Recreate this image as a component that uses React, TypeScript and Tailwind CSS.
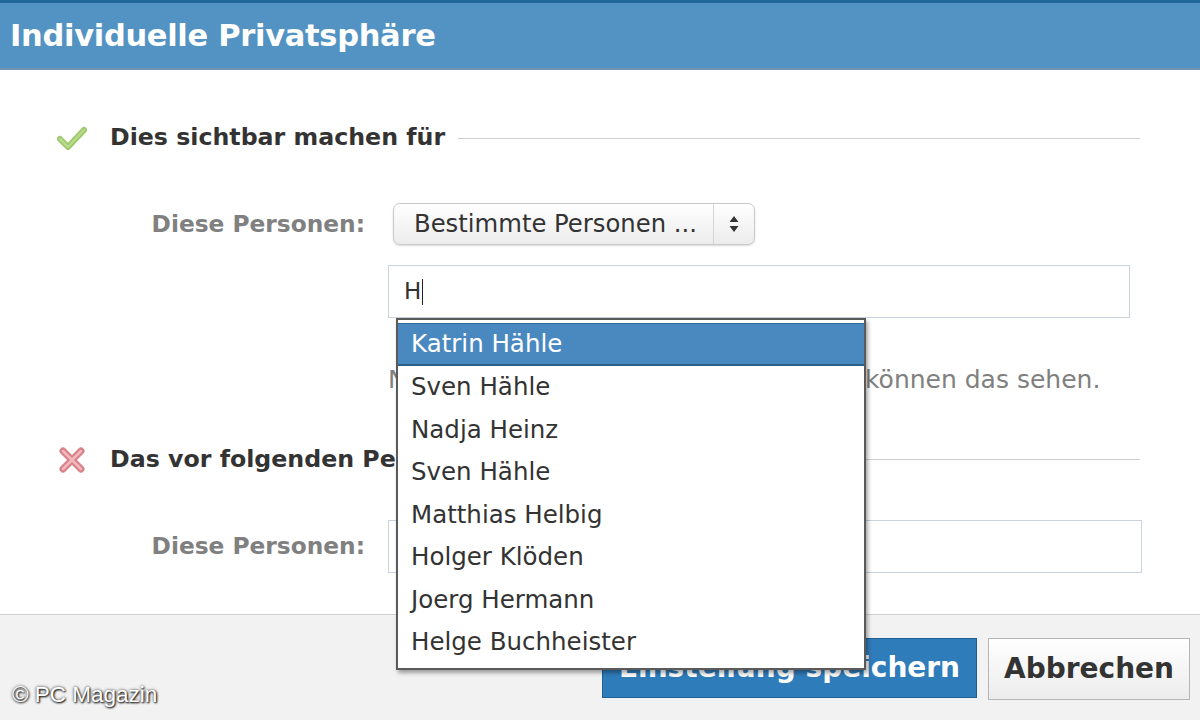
import React from "react"

const names = [
  "Katrin Hähle",
  "Sven Hähle",
  "Nadja Heinz",
  "Sven Hähle",
  "Matthias Helbig",
  "Holger Klöden",
  "Joerg Hermann",
  "Helge Buchheister",
]

function CheckIcon() {
  return (
    <svg width="30" height="26" viewBox="0 0 30 26">
      <path d="M3 14 L11 22 L27 5" fill="none" stroke="#9cc76a" strokeWidth="6" strokeLinecap="round" strokeLinejoin="round" />
      <path d="M3 14 L11 22 L27 5" fill="none" stroke="#b9dc8c" strokeWidth="2.5" strokeLinecap="round" strokeLinejoin="round" />
    </svg>
  )
}

function CrossIcon() {
  return (
    <svg width="28" height="28" viewBox="0 0 28 28">
      <path d="M5 5 L23 23 M23 5 L5 23" fill="none" stroke="#d9828a" strokeWidth="7" strokeLinecap="round" />
      <path d="M5 5 L23 23 M23 5 L5 23" fill="none" stroke="#f3b8bd" strokeWidth="2.5" strokeLinecap="round" />
    </svg>
  )
}

function SectionHeading({ icon, title }: { icon: React.ReactNode; title: string }) {
  return (
    <div className="flex items-center h-[30px] pl-[57px] pr-[60px]">
      <div className="w-[30px] flex justify-center">{icon}</div>
      <span className="ml-[23px] text-[23.7px] font-bold text-[#333] whitespace-nowrap">{title}</span>
      <div className="ml-[13px] flex-1 h-px bg-[#cfcfcf]" />
    </div>
  )
}

export default function App() {
  return (
    <div className="relative w-[1200px] h-[720px] flex flex-col bg-white overflow-hidden font-['DejaVu_Sans','Open_Sans',sans-serif]">
      {/* header */}
      <div className="h-[70px] shrink-0 bg-[#5393c3] border-t-[3px] border-[#1f6899] border-b-2 border-b-[#6f95b2] flex items-center pl-[10px]">
        <h1 className="text-[30.5px] font-bold text-white tracking-[-0.3px]">Individuelle Privatsphäre</h1>
      </div>

      {/* body */}
      <div className="flex-1 pt-[53px]">
        <SectionHeading icon={<CheckIcon />} title="Dies sichtbar machen für" />

        <div className="mt-[50px] flex items-center">
          <div className="w-[365px] text-right text-[23.3px] font-bold text-[#808080]">Diese Personen:</div>
          <div className="ml-[28px] w-[362px] h-[42px] rounded-[7px] border border-[#c9c9c9] bg-gradient-to-b from-white to-[#ececec] shadow-[0_1px_2px_rgba(0,0,0,0.15)] flex items-center">
            <span className="flex-1 pl-[20px] text-[24.3px] text-[#333] whitespace-nowrap">Bestimmte Personen ...</span>
            <div className="w-px h-full bg-[#d4d4d4]" />
            <div className="w-[40px] flex justify-center">
              <svg width="10" height="18" viewBox="0 0 10 18">
                <path d="M5 1 L9.5 7 L0.5 7 Z M5 17 L9.5 11 L0.5 11 Z" fill="#333" />
              </svg>
            </div>
          </div>
        </div>

        <div className="relative mt-[20px] ml-[388px] mr-[70px]">
          <div className="h-[53px] border border-[#c9d3dd] bg-white flex items-center pl-[15px] text-[23px] text-[#333]">
            H<span className="ml-[1px] w-px h-[26px] bg-[#222]" />
          </div>

          <div className="mt-[43px] flex text-[25px] text-[#808080] whitespace-nowrap">
            <span className="w-[477px] shrink-0 overflow-hidden">Nur diese Personen</span>
            <span>können das sehen.</span>
          </div>

          {/* autocomplete dropdown */}
          <div className="absolute z-10 left-[8px] top-[53px] w-[470px] h-[352px] bg-white border-2 border-[#5a5a5a] shadow-[2px_3px_4px_rgba(0,0,0,0.35)] pt-[3px]">
            {names.map((n, i) => (
              <div
                key={i}
                className={
                  i === 0
                    ? "h-[43px] flex items-center pl-[13px] text-[24.5px] text-white bg-[#4a89bf] border-t border-[#2f6a9a] border-b-2 border-b-[#2c5f88]"
                    : "h-[42.6px] flex items-center pl-[13px] text-[24.5px] text-[#333]"
                }
              >
                {n}
              </div>
            ))}
          </div>
        </div>

        <div className="mt-[46px]">
          <SectionHeading icon={<CrossIcon />} title="Das vor folgenden Personen verbergen" />
        </div>

        <div className="mt-[45px] flex items-center">
          <div className="w-[365px] text-right text-[23.3px] font-bold text-[#808080]">Diese Personen:</div>
          <div className="ml-[23px] w-[754px] h-[53px] border border-[#c9d3dd] bg-white" />
        </div>
      </div>

      {/* footer */}
      <div className="h-[106px] shrink-0 bg-[#f2f2f2] border-t border-[#d0d0d0] flex justify-end items-start pt-[23px] pr-[10px] gap-[11px]">
        <button className="w-[375px] h-[60px] bg-[#2f7cba] border border-[#1e5f94] text-white text-[28px] font-bold whitespace-nowrap">
          Einstellung speichern
        </button>
        <button className="w-[202px] h-[62px] bg-gradient-to-b from-white to-[#ececec] border border-[#b5b5b5] text-[#333] text-[28px] font-bold">
          Abbrechen
        </button>
      </div>

      {/* watermark */}
      <div className="absolute left-[12px] bottom-[8px] text-[22.5px] text-white font-['Liberation_Sans',Arial,sans-serif] [text-shadow:0_0_3px_#333,1px_1px_2px_#000]">
        © PC Magazin
      </div>
    </div>
  )
}
